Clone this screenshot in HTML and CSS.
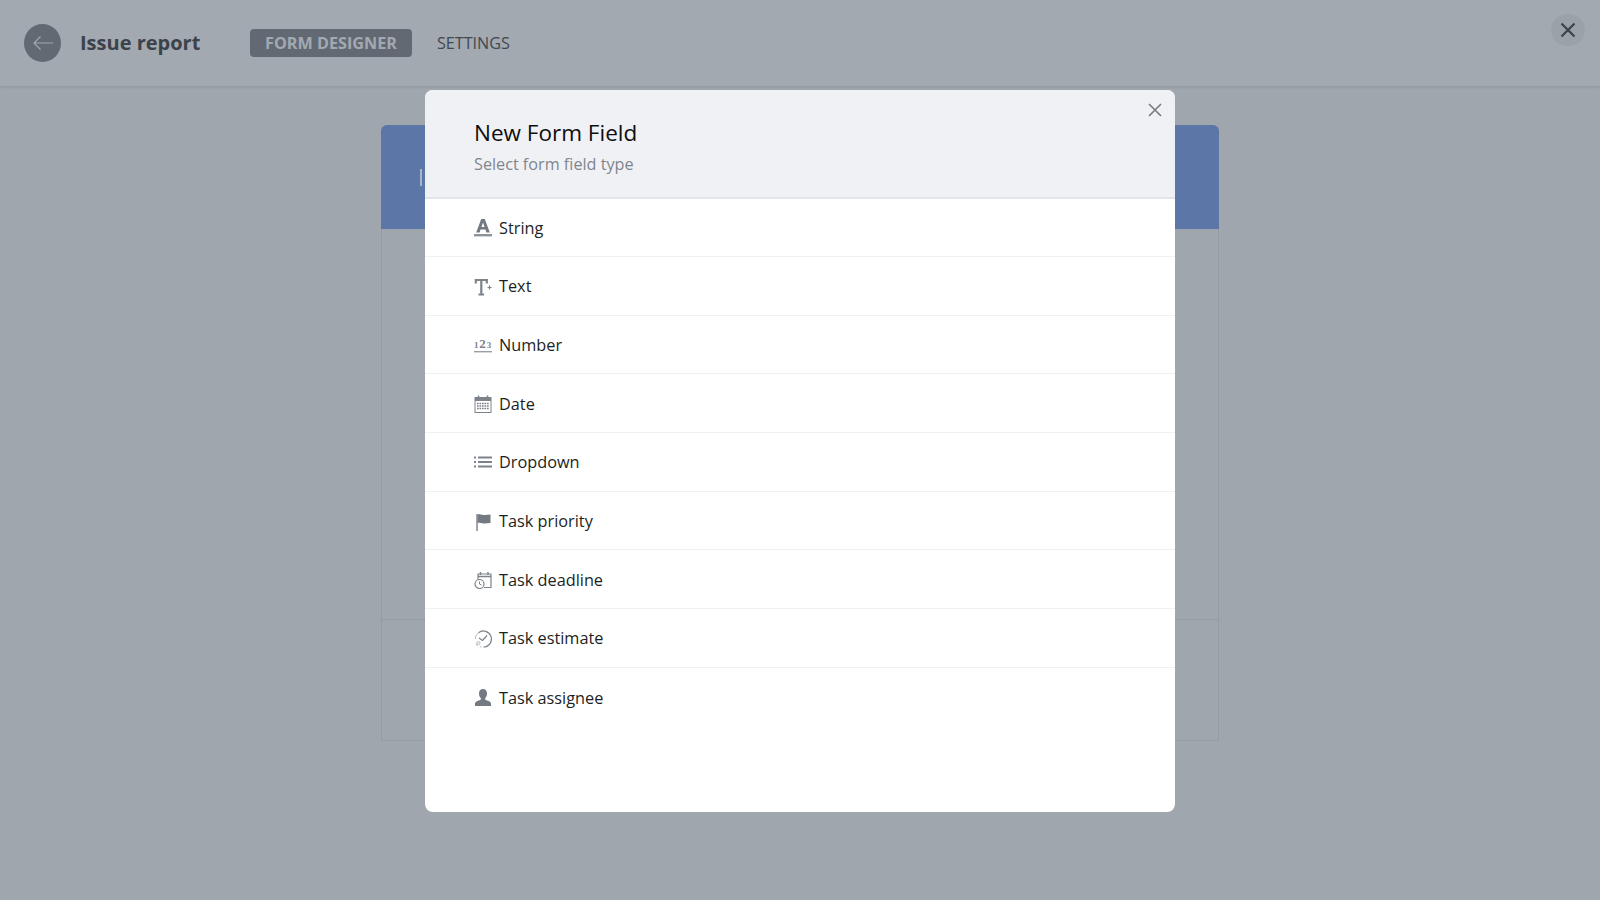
FILE: index.html
```html
<!DOCTYPE html>
<html lang="en">
<head>
<meta charset="utf-8">
<title>Issue report</title>
<link rel="stylesheet" href="styles.css">
</head>
<body>
<header class="topbar">
  <button class="back" aria-label="Back">
    <svg width="24" height="16" viewBox="0 0 24 16"><path d="M22 8H3M9.500 1.500 3 8l6.500 6.500" fill="none" stroke="#a0a7af" stroke-width="1.200"/></svg>
  </button>
  <h1 class="page-title">Issue report</h1>
  <nav class="tabs">
    <span class="tab tab-active">FORM DESIGNER</span>
    <span class="tab">SETTINGS</span>
  </nav>
  <button class="page-close" aria-label="Close">
    <svg width="16" height="16" viewBox="0 0 16 16"><path d="M1.500 1.500l13 13M14.500 1.500l-13 13" stroke="#3c4249" stroke-width="2.200" fill="none"/></svg>
  </button>
</header>
<main class="canvas">
  <section class="form-card">
    <div class="form-banner"><span class="form-caret"></span></div>
    <div class="form-body"></div>
    <div class="form-foot"></div>
  </section>
</main>
<div class="modal">
  <div class="modal-head">
    <h2 class="modal-title">New Form Field</h2>
    <p class="modal-sub">Select form field type</p>
    <button class="modal-close" aria-label="Close">
      <svg width="14" height="14" viewBox="0 0 14 14"><path d="M1 1l12 12M13 1 1 13" stroke="#777d84" stroke-width="1.700" fill="none"/></svg>
    </button>
  </div>
  <ul class="type-list">
    <li class="type-row">
      <svg class="ico" width="18" height="19" viewBox="0 0 18 19"><path d="M2.200 14.500 7.200 1h3.600l5 13.500h-3.400l-1-3H6.600l-1 3zM7.500 9h3L9 4.400z" fill="#747a82" fill-rule="evenodd"/><rect y="16" width="18" height="2.400" fill="#8d939a"/></svg>
      <span>String</span>
    </li>
    <li class="type-row">
      <svg class="ico" width="18" height="19" viewBox="0 0 18 19"><path d="M1.800 6.500V3h11v3.500M7.300 3v14.500M4.500 17.500h5.600" fill="none" stroke="#7d838b" stroke-width="2.200"/><path d="M13.500 10.500h4M15.500 8.500v4" stroke="#7d838b" stroke-width="1.200"/></svg>
      <span>Text</span>
    </li>
    <li class="type-row">
      <svg class="ico" width="18" height="19" viewBox="0 0 18 19"><text x="0" y="12" class="ico-num">1</text><text x="5.300" y="12" class="ico-num ico-num-big">2</text><text x="12.800" y="12" class="ico-num">3</text><rect y="15" width="18" height="1.400" fill="#9a9fa6"/></svg>
      <span>Number</span>
    </li>
    <li class="type-row">
      <svg class="ico" width="18" height="19" viewBox="0 0 18 19"><rect x="1" y="3.500" width="16" height="15" fill="none" stroke="#7d838b"/><rect x="1" y="3.500" width="16" height="3.500" fill="#7d838b"/><path d="M4.500 1.500v3M13.500 1.500v3" stroke="#7d838b" stroke-width="1.500"/><path d="M3 9.500h12M3 12h12M3 14.500h12" stroke="#7d838b" stroke-width="1.700" stroke-dasharray="1.700 .8"/></svg>
      <span>Date</span>
    </li>
    <li class="type-row">
      <svg class="ico" width="18" height="18" viewBox="0 0 18 18"><path d="M4 4.500h14M4 9h14M4 13.500h14" stroke="#7d838b" stroke-width="2"/><path d="M0 4.500h2M0 9h2M0 13.500h2" stroke="#7d838b" stroke-width="2"/></svg>
      <span>Dropdown</span>
    </li>
    <li class="type-row">
      <svg class="ico" width="18" height="19" viewBox="0 0 18 19"><rect x="2" y="2" width="2" height="17" fill="#a2a6ac"/><path d="M3.500 2.500c3-1 5 .5 7 .5 2 0 4-.5 6-.5V11c-2 0-4 .5-6 .5-2 0-4-1.500-7-.5z" fill="#747a82"/></svg>
      <span>Task priority</span>
    </li>
    <li class="type-row">
      <svg class="ico" width="18" height="19" viewBox="0 0 18 19"><path d="M4 9V4h13v13.500h-7" fill="none" stroke="#7d838b" stroke-width="1.200"/><path d="M4 6.500h13" stroke="#7d838b" stroke-width="1.500"/><path d="M6.500 2v3M14 2v3" stroke="#7d838b" stroke-width="1.400"/><circle cx="5.500" cy="14" r="4.500" fill="#fff" stroke="#7d838b" stroke-width="1.200"/><path d="M5.500 11.500V14l2 1" fill="none" stroke="#7d838b"/></svg>
      <span>Task deadline</span>
    </li>
    <li class="type-row">
      <svg class="ico" width="18" height="19" viewBox="0 0 18 19"><path d="M4.500 3.700A8 8 0 1 1 9.500 18" fill="none" stroke="#7d838b" stroke-width="1.200"/><path d="M1.200 10A8 8 0 0 1 4.500 3.700M2 14.500l1.500 2.500M6 17.600l1.500.4" fill="none" stroke="#b5b9be"/><path d="M5 9l3.500 2.500L13 6.500" fill="none" stroke="#7d838b" stroke-width="1.200"/><circle cx="4.500" cy="14" r="1.500" fill="none" stroke="#b5b9be"/></svg>
      <span>Task estimate</span>
    </li>
    <li class="type-row">
      <svg class="ico" width="18" height="19" viewBox="0 0 18 19"><path d="M9 1c2.500 0 4 1.800 4 4.400 0 2-.8 3.500-1.800 4.600v1.400c0 .8 5.800 1.300 5.800 4.100V18H1v-2.500c0-2.800 5.800-3.300 5.800-4.100V10C5.800 8.900 5 7.400 5 5.400 5 2.800 6.500 1 9 1z" fill="#747a82"/></svg>
      <span>Task assignee</span>
    </li>
  </ul>
</div>
</body>
</html>
```
FILE: styles.css
```css
* { box-sizing: border-box; }
html, body { margin: 0; height: 100%; }
body {
  width: 1600px;
  height: 900px;
  overflow: hidden;
  background: #9fa6ad;
  font-family: "Open Sans", "Liberation Sans", sans-serif;
  position: relative;
}
button { border: 0; padding: 0; background: none; font: inherit; }
.topbar {
  height: 87px;
  background: #a2a9b1;
  border-bottom: 1px solid #959ca4;
  box-shadow: 0 1px 2px rgba(0, 0, 0, .05);
  display: flex;
  align-items: center;
  padding-left: 24px;
  position: relative;
}
.back {
  width: 37px;
  height: 38px;
  border-radius: 50%;
  background: #636973;
  display: flex;
  align-items: center;
  justify-content: center;
}
.page-title {
  margin: 0 0 2px 19px;
  width: 170px;
  font-size: 20px;
  font-weight: 700;
  color: #3c4249;
}
.tabs { display: flex; align-items: center; gap: 10px; }
.tab {
  height: 28px;
  padding: 0 15px;
  border-radius: 4px;
  display: flex;
  align-items: center;
  font-size: 16.200px;
  color: #42484f;
}
.tab-active { background: #636973; color: #a2a9b1; font-weight: 700; }
.page-close {
  position: absolute;
  top: 14px;
  right: 15px;
  width: 34px;
  height: 32px;
  border-radius: 50%;
  background: #9aa1a9;
  display: flex;
  align-items: center;
  justify-content: center;
}
.canvas { display: flex; justify-content: center; padding-top: 38px; }
.form-card { width: 838px; height: 616px; display: flex; flex-direction: column; }
.form-banner {
  height: 104px;
  background: #5c76a8;
  border-radius: 6px 6px 0 0;
  padding: 44px 0 0 39px;
}
.form-caret { display: block; width: 2px; height: 17px; background: #a9b5cd; }
.form-body { height: 391px; border: 1px solid #959ca3; border-width: 0 1px; border-bottom: 1px dotted #8c939b; }
.form-foot { flex: 1; border: 1px solid #959ca3; border-top: 0; }
.modal {
  position: absolute;
  left: 425px;
  top: 90px;
  width: 750px;
  height: 722px;
  background: #fff;
  border-radius: 8px;
  overflow: hidden;
}
.modal-head {
  height: 109px;
  background: #f0f1f5;
  border-bottom: 2px solid #e3e5e9;
  padding: 28px 0 0 49px;
  position: relative;
}
.modal-title { margin: 0; font-size: 22.500px; font-weight: 400; line-height: 30px; color: #0e0e0e; }
.modal-sub { margin: 5px 0 0; font-size: 16.200px; line-height: 22px; color: #80868d; }
.modal-close { position: absolute; top: 13px; right: 13.500px; width: 14px; height: 14px; display: flex; }
.type-list { list-style: none; margin: -0.500px 0 0; padding: 0; }
.type-row {
  height: 58.670px;
  padding: 1px 0 0 49px;
  display: flex;
  align-items: center;
  gap: 7px;
  font-size: 16.300px;
  color: #1c1f23;
  border-bottom: 1px solid #eff0f2;
}
.type-row:last-child { border-bottom: 0; }
.ico { flex: none; }
.ico-num { font-family: "Liberation Serif", serif; font-size: 9px; font-weight: 700; fill: #7d838b; }
.ico-num-big { font-size: 13px; }
```
